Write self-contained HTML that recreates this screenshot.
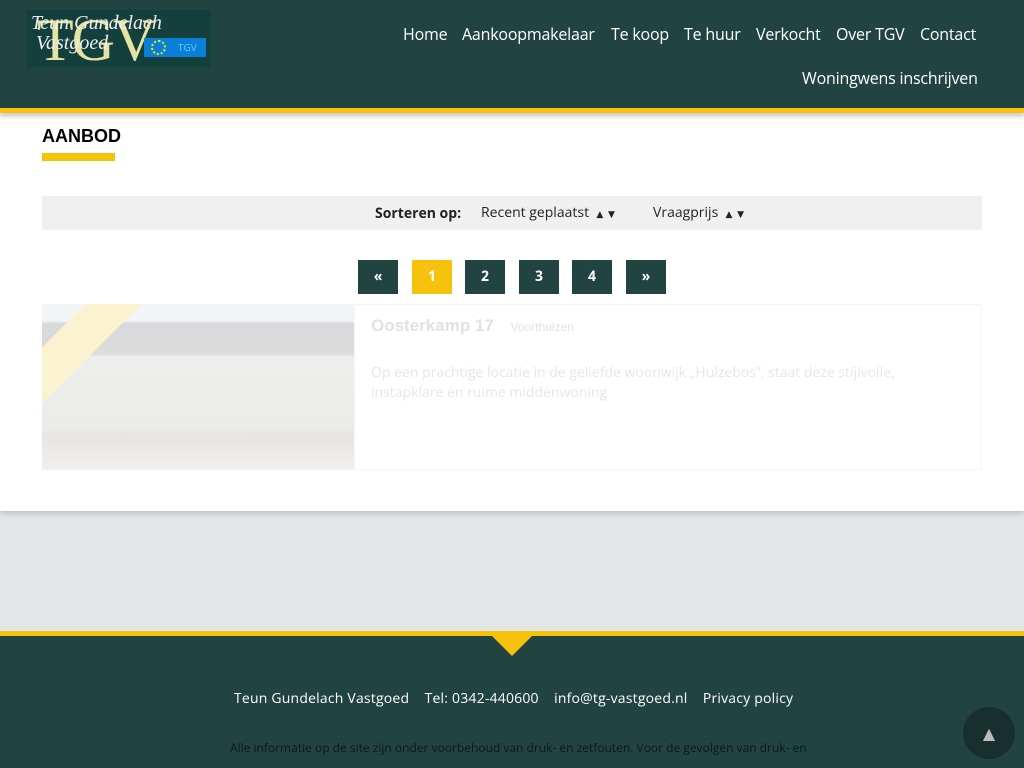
<!DOCTYPE html>
<html><head><meta charset="utf-8"><style>
*{margin:0;padding:0;box-sizing:border-box}
body{width:1024px;height:768px;overflow:hidden;font-family:"Open Sans","DejaVu Sans","Liberation Sans",sans-serif;background:#e4e5e7;position:relative}
.hdr{position:absolute;left:0;top:0;width:1024px;height:108px;background:#214441}
.ybar{position:absolute;left:0;top:108px;width:1024px;height:5px;background:#f7c20c;box-shadow:0 3px 5px rgba(0,0,0,.25);z-index:2}
.logo{position:absolute;left:27px;top:10px;width:184px;height:57px;background:#13403d;overflow:hidden}
.nav a{position:absolute;color:#fff;font-size:16px;text-decoration:none;white-space:nowrap;letter-spacing:-0.2px}
.main{position:absolute;left:0;top:113px;width:1024px;height:398px;background:#fff;box-shadow:0 2px 6px rgba(0,0,0,.2)}
h1{position:absolute;left:42px;top:13px;font-size:18px;font-weight:bold;color:#000;font-family:"Liberation Sans",sans-serif}
.ul{position:absolute;left:42px;top:40px;width:73px;height:8px;background:#f7c20c}
.sort{position:absolute;left:42px;top:83px;width:940px;height:34px;background:#f0f0f0;font-size:14px;color:#222}
.pg{position:absolute;top:147px;width:40px;height:34px;background:#214441;color:#fff;font-size:14px;font-weight:bold;text-align:center;line-height:34px}
.foot{position:absolute;left:0;top:631px;width:1024px;height:137px;background:#214441;border-top:5px solid #f7c20c}
</style></head><body>
<div class="hdr">
 <div class="logo">
  <div style="position:absolute;left:10px;top:-4px;font-family:'Liberation Serif',serif;font-size:60px;color:#e6e2a0;letter-spacing:-2px">TGV</div>
  <div style="position:absolute;left:4px;top:3px;font-family:'Liberation Serif',serif;font-style:italic;font-size:20px;color:#eee;line-height:20px">Teun Gundelach<br>&nbsp;Vastgoed</div>
  <div style="position:absolute;left:117px;top:28px;width:62px;height:19px;background:#0a7fd8;color:#6cf;font-size:10px;line-height:19px;padding-left:34px">TGV</div>
  <div style="position:absolute;left:124px;top:30px;width:15px;height:15px;border:2px dotted #ee0;border-radius:50%"></div>
 </div>
 <div class="nav">
  <a style="left:403px;top:23px">Home</a><a style="left:462px;top:23px">Aankoopmakelaar</a><a style="left:611px;top:23px">Te koop</a><a style="left:684px;top:23px">Te huur</a><a style="left:756px;top:23px">Verkocht</a><a style="left:836px;top:23px">Over TGV</a><a style="left:920px;top:23px">Contact</a><a style="left:802px;top:67px">Woningwens inschrijven</a>
 </div>
</div>
<div class="ybar"></div>
<div class="main">
 <h1>AANBOD</h1><div class="ul"></div>
 <div class="sort"><span style="position:absolute;left:333px;top:8px;font-weight:bold">Sorteren op:</span><span style="position:absolute;left:439px;top:7px">Recent geplaatst &nbsp;<small style="font-size:9px">▲ &nbsp;▼</small></span><span style="position:absolute;left:611px;top:7px">Vraagprijs &nbsp;<small style="font-size:9px">▲ &nbsp;▼</small></span></div>
 <div class="pg" style="left:358px">«</div><div class="pg" style="left:412px;background:#f7c20c">1</div><div class="pg" style="left:465px">2</div><div class="pg" style="left:519px">3</div><div class="pg" style="left:572px">4</div><div class="pg" style="left:626px">»</div>
 <div style="position:absolute;left:42px;top:191px;width:312px;height:166px;background:linear-gradient(#f2f4f6 0,#f2f4f6 10%,#d8d9db 12%,#dcdcdc 30%,#eeeeec 32%,#ebebea 75%,#e7e5e2 80%,#f0f0ef 100%)"></div>
 <div style="position:absolute;left:42px;top:191px;width:100px;height:100px;background:linear-gradient(135deg,transparent 0,transparent 22%,#fbf3cf 22%,#fbf3cf 50%,transparent 50%)"></div>
 <div style="position:absolute;left:354px;top:191px;width:628px;height:166px;border:1px solid #f5f5f5"></div>
 <div style="position:absolute;left:371px;top:203px;font-size:17px;font-weight:bold;color:#e2e2e2;font-family:'Liberation Sans',sans-serif">Oosterkamp 17 <span style="font-size:12px;font-weight:normal;margin-left:12px">Voorthuizen</span></div>
 <div style="position:absolute;left:371px;top:250px;width:560px;font-size:14px;line-height:20px;color:#e6e6e6">Op een prachtige locatie in de geliefde woonwijk „Hulzebos”, staat deze stijlvolle, instapklare en ruime middenwoning</div>
</div>
<div class="foot">
 <div style="position:absolute;left:492px;top:0;width:0;height:0;border-left:20px solid transparent;border-right:20px solid transparent;border-top:20px solid #f7c20c"></div>
 <div style="position:absolute;left:234px;top:53px;color:#fff;font-size:14px;white-space:nowrap;letter-spacing:0.2px">Teun Gundelach Vastgoed &nbsp;&nbsp; Tel: 0342-440600 &nbsp;&nbsp; info@tg-vastgoed.nl &nbsp;&nbsp; Privacy policy</div>
 <div style="position:absolute;left:230px;top:103px;color:#0b1816;font-size:12px;white-space:nowrap">Alle informatie op de site zijn onder voorbehoud van druk- en zetfouten. Voor de gevolgen van druk- en</div>
 <div style="position:absolute;left:963px;top:71px;width:52px;height:52px;border-radius:50%;background:#172f2d;color:#bbb;font-size:16px;text-align:center;line-height:52px">▲</div>
</div>
</body></html>
